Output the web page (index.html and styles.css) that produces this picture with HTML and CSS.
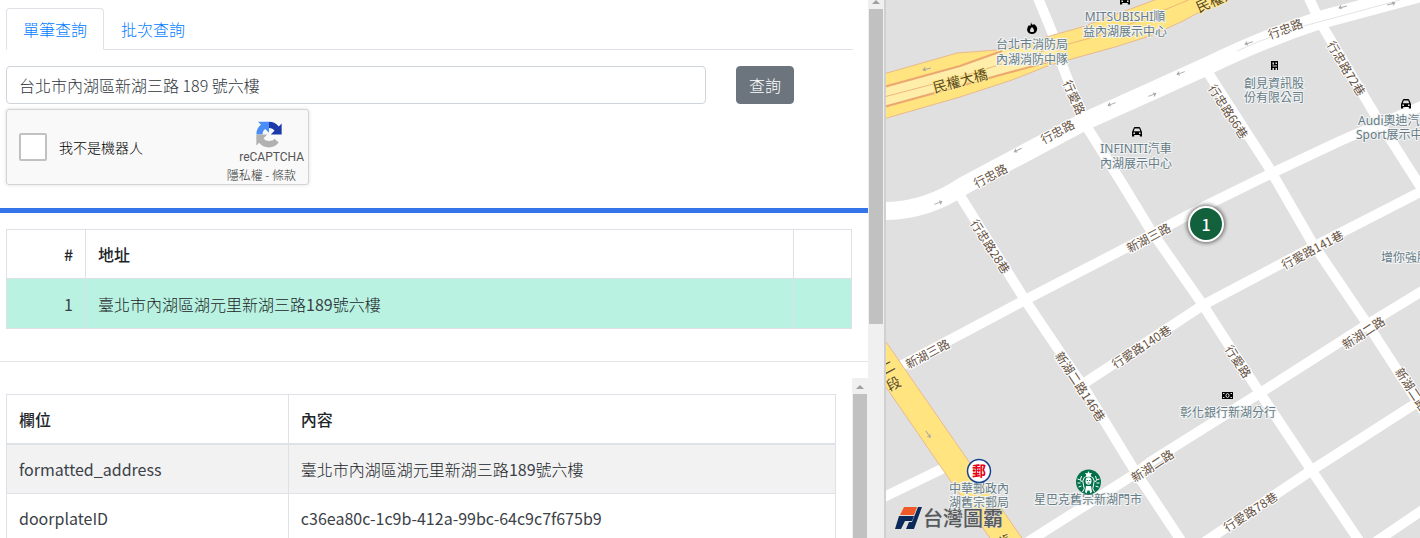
FILE: index.html
```html
<!DOCTYPE html>
<html lang="zh-Hant">
<head>
<meta charset="utf-8">
<meta name="viewport" content="width=device-width, initial-scale=1">
<title>地址查詢</title>
<link rel="stylesheet" href="styles.css">
</head>
<body>
<div class="app">
  <section class="panel">
    <div class="panel-body">
      <div class="query">
        <nav class="tabs">
          <a class="tab tab-active" href="#single">單筆查詢</a>
          <a class="tab" href="#batch">批次查詢</a>
        </nav>
        <form class="search">
          <input class="search-input" type="text" aria-label="地址" value="台北市內湖區新湖三路 189 號六樓">
          <button class="search-button" type="button">查詢</button>
        </form>
        <div class="captcha">
          <label class="captcha-check"><input class="captcha-box" type="checkbox"><span>我不是機器人</span></label>
          <div class="captcha-brand">
            <svg class="captcha-logo" viewBox="0 0 32 32" aria-hidden="true">
              <path fill="#1c3aa9" d="M16 1c5 0 9 2 11.500 5.500L31 3v13H18l4.500-4.500C21 9.500 19 8.300 16 8.300z"/>
              <path fill="#4a8df6" d="M16 1v13l-4.500-4.500C9.500 11 8.300 13 8.300 16H1c0-5 2-9 5.500-11.500L3 1z"/>
              <path fill="#b1b1b1" d="M1 16h13l-4.500 4.500c1.500 2 3.500 3.200 6.500 3.200 3.200 0 5.300-1 6.500-2.700l5 4.500C25 29 21 31.300 16 31.300c-5 0-9-2-11.500-5.500L1 29z"/>
            </svg>
            <span class="captcha-name">reCAPTCHA</span>
            <span class="captcha-links"><a href="#privacy">隱私權</a> - <a href="#terms">條款</a></span>
          </div>
        </div>
      </div>
      <div class="results">
        <table class="table result-table">
          <colgroup><col class="col-number"><col><col class="col-action"></colgroup>
          <thead><tr><th class="number">#</th><th>地址</th><th></th></tr></thead>
          <tbody><tr class="selected"><td class="number latin">1</td><td>臺北市內湖區湖元里新湖三路<span class="latin">189</span>號六樓</td><td></td></tr></tbody>
        </table>
      </div>
      <div class="details">
        <div class="details-body">
          <table class="table detail-table">
            <colgroup><col class="col-field"><col></colgroup>
            <thead><tr><th>欄位</th><th>內容</th></tr></thead>
            <tbody>
              <tr><td class="latin">formatted_address</td><td>臺北市內湖區湖元里新湖三路<span class="latin">189</span>號六樓</td></tr>
              <tr><td class="latin">doorplateID</td><td class="latin">c36ea80c-1c9b-412a-99bc-64c9c7f675b9</td></tr>
            </tbody>
          </table>
        </div>
        <div class="scrollbar"><span class="arrow"></span><span class="thumb thumb-fill"></span></div>
      </div>
    </div>
    <div class="scrollbar scrollbar-main"><span class="arrow"></span><span class="thumb thumb-page"></span></div>
  </section>

  <main class="map">
    <svg class="map-canvas" viewBox="886 0 534 538" preserveAspectRatio="xMinYMin slice" role="img" aria-label="地圖">
      <defs>
        <g id="car"><path d="M-5 4.500V0l1.800-4.200Q-3-5-2-5h4q1 0 1.200.8L5 0v4.500H2.800V3h-5.600v1.500z"/><path fill="#e0e0e0" d="M-2.300-3.500h4.600L3.200-.8h-6.400zM-3.600.5h1.600V2h-1.600zM2 .5h1.600V2H2z"/></g>
        <path id="oneway" class="oneway" d="M-4 0h8M-1.500-2L-4 0l2.500 1.500"/>
      </defs>

      <g class="road">
        <path d="M1038-2L1052 32L1063 67L1085 124L1120 180L1150 229L1203 305L1230 347L1260 393L1312 471L1360 542"/>
        <path d="M959 194L1025 300L1060 352L1083 386L1135 471L1182 542"/>
        <path d="M1205 68L1268 166L1313 244L1368 325L1390 359L1440 436"/>
        <path d="M1308-4L1320 22L1380 123L1424 192"/>
        <path d="M897 368L1025 300L1147 237L1205 206L1268 175L1340 141L1424 105"/>
        <path d="M1083 384L1150 340L1203 305L1313 247L1424 190"/>
        <path d="M1026 543L1135 474L1150 462L1260 393L1368 324L1424 290"/>
        <path d="M884 497L948 466"/>
        <path d="M1203 543L1312 470L1424 398"/>
        <path d="M1374 543L1424 509"/>
      </g>
      <path class="road road-wide" d="M880 211Q925 212 963 186L1083 122L1150 92L1205 67Q1265 38 1320 20L1424-8"/>
      <path class="tram" d="M1237 51Q1280 31 1330 19L1400 0"/>

      <path class="highway" d="M880 75L957 53L997 50L1050 36L1082 27L1160-2H1225L1183 21L1150 36L1115 47L1050 65L1012 80L960 97L880 120z"/>
      <path class="highway-inner" d="M880 88L960 66L1002 52L1060 45L1050 61L1000 75L960 86L880 108z"/>
      <path class="lane" d="M880 88L960 66L1002 51M880 108L960 86L1000 75L1048 62"/>
      <path class="lane-thin" d="M880 98L960 77L1050 49L1105 34L1150 16L1193-2"/>
      <path class="highway" d="M880 334L886 342L1026 544H994L886 387L880 379z"/>

      <use href="#oneway" transform="translate(927 69) rotate(-14)"/>
      <use href="#oneway" transform="translate(1018 150) rotate(-26)"/>
      <use href="#oneway" transform="translate(1112 104) rotate(-20)"/>
      <use href="#oneway" transform="translate(1152 95) rotate(160)"/>
      <use href="#oneway" transform="translate(1181 73) rotate(-20)"/>
      <use href="#oneway" transform="translate(1249 43) rotate(-18)"/>
      <use href="#oneway" transform="translate(1343 7) rotate(-14)"/>
      <use href="#oneway" transform="translate(1391 4) rotate(164)"/>
      <use href="#oneway" transform="translate(938 203) rotate(160)"/>
      <use href="#oneway" transform="translate(928 434) rotate(235)"/>

      <g class="street">
        <text class="street-major" transform="translate(960 80) rotate(-15)">民權大橋</text>
        <text class="street-major" transform="translate(1222 -4) rotate(-24)">民權大橋</text>
        <text class="street-major" transform="translate(887 367) rotate(-28)">二</text>
        <text class="street-major" transform="translate(893 383) rotate(-28)">段</text>
        <text class="street-major" transform="translate(1004 541) rotate(-28)">舊</text>
        <text transform="translate(1057 131) rotate(-28)">行忠路</text>
        <text transform="translate(990 175) rotate(-28)">行忠路</text>
        <text transform="translate(1285 28) rotate(-20)">行忠路</text>
        <text transform="translate(1075 97) rotate(66)">行愛路</text>
        <text transform="translate(991 246) rotate(57)">行忠路28巷</text>
        <text transform="translate(1229 111) rotate(57)">行忠路66巷</text>
        <text transform="translate(1347 68) rotate(59)">行忠路72巷</text>
        <text transform="translate(1148 237) rotate(-28)">新湖三路</text>
        <text transform="translate(927 353) rotate(-28)">新湖三路</text>
        <text transform="translate(1312 249) rotate(-28)">行愛路141巷</text>
        <text transform="translate(1141 346) rotate(-33)">行愛路140巷</text>
        <text transform="translate(1081 386) rotate(57)">新湖二路146巷</text>
        <text transform="translate(1239 361) rotate(57)">行愛路</text>
        <text transform="translate(1363 332) rotate(-33)">新湖二路</text>
        <text transform="translate(1152 465) rotate(-33)">新湖二路</text>
        <text transform="translate(1421 402) rotate(57)">新湖二路146巷</text>
        <text transform="translate(1250 511) rotate(-33)">行愛路78巷</text>
      </g>

      <g class="place">
        <text x="1032" y="49">台北市消防局</text><text x="1032" y="64">內湖消防中隊</text>
        <text x="1125" y="21">MITSUBISHI順</text><text x="1125" y="36">益內湖展示中心</text>
        <text x="1136" y="153">INFINITI汽車</text><text x="1136" y="168">內湖展示中心</text>
        <text x="1274" y="88">創見資訊股</text><text x="1274" y="102">份有限公司</text>
        <text class="place-start" x="1358" y="125">Audi奧迪汽車</text><text class="place-start" x="1356" y="139">Sport展示中心</text>
        <text class="place-start" x="1381" y="262">增你強股份</text>
        <text x="1228" y="417">彰化銀行新湖分行</text>
        <text x="1088" y="504">星巴克舊宗新湖門市</text>
        <text x="979" y="493">中華郵政內</text><text x="979" y="507">湖舊宗郵局</text>
      </g>

      <use href="#car" x="1125" y="0"/>
      <use href="#car" x="1137" y="132"/>
      <use href="#car" x="1406" y="104"/>
      <path d="M1031 22q0 2 2 3l1-1q4 3 3 6-1 4-5 4t-5-4q0-3 2-5l1 1q1-1 1-4z"/><path fill="#e0e0e0" d="M1032 27q3 3 1.500 5h-3q-1.500-2 1.500-5z"/>
      <path d="M1271 61h7v9h-7z"/><path fill="#e0e0e0" d="M1272.500 62.500h1.500v2h-1.500zM1275.500 62.500h1.500v1.500h-1.500zM1272.500 65.500h4.500v1h-4.500zM1272.500 68h1.500v2h-1.500zM1275.500 68h1.500v2h-1.500z"/>
      <path d="M1222 392h11v7h-11z"/><ellipse class="cash" cx="1227.500" cy="395.500" rx="1.500" ry="2"/><path fill="#ddd" d="M1223 393h1.500v1h-1.500zM1230.500 393h1.500v1h-1.500zM1223 397h1.500v1h-1.500zM1230.500 397h1.500v1h-1.500z"/>

      <circle class="post-ring" cx="979" cy="471" r="11.500"/>
      <text class="post-mark" x="979" y="476">郵</text>

      <g transform="translate(1088.500 482)">
        <circle r="12.500" fill="#00704a"/>
        <path fill="#fff" d="M0-11l1 2.300 2.600-.3-1.500 2 1.500 2.500Q0-6-3.600-4.500l1.500-2.500-1.500-2 2.600.3z"/>
        <ellipse cy="-1" rx="3" ry="3.800" fill="#fff"/>
        <path class="siren" d="M-4-5q-3 4-1 8t-1 7M4-5q3 4 1 8t1 7M-7-6q-2 4 0 6M7-6q2 4 0 6M-11-3l3 1M11-3l-3 1M-11 1h3M11 1H8M-10 5l3-1M10 5L7 4"/>
        <path fill="#fff" d="M-2.500 4h5l1 6-1.500 1.500-1-3H-1l-1 3L-3.500 10z"/>
        <path stroke="#00704a" d="M-1.800-1.500h1.200M.6-1.500h1.200M-1 1h2"/>
      </g>

      <path fill="#f05a28" d="M904 507h13l-3 8h-14z"/>
      <path fill="#0b2a5b" d="M918 507h4l-8 22h-8l3-7h3zM899 516h15l-2 5h-7l-4 8h-6z"/>
      <text class="map-brand" x="923" y="526">台灣圖霸</text>
    </svg>
    <button class="pin" type="button">1</button>
  </main>
</div>
</body>
</html>
```

FILE: styles.css
```css
* { box-sizing: border-box; }

body {
  margin: 0;
  color: #212529;
  background: #fff;
  font: 300 16px/24px "Noto Sans CJK TC", "Noto Sans", sans-serif;
}

a { color: #007bff; text-decoration: none; }

.app {
  display: grid;
  grid-template-columns: 177fr 107fr;
  height: 100vh;
  overflow: hidden;
}

.panel {
  display: grid;
  grid-template-columns: minmax(0, 1fr) 17px;
  min-width: 0;
  height: 100vh;
}

.panel-body {
  display: flex;
  flex-direction: column;
  min-width: 0;
  height: 100vh;
}

.query {
  padding: 8px 15px 23px 6px;
  border-bottom: 5px solid #3574e8;
}

.tabs {
  display: flex;
  border-bottom: 1px solid #dee2e6;
}

.tab {
  margin-bottom: -1px;
  padding: 8px 16px;
  border: 1px solid transparent;
  border-radius: 4px 4px 0 0;
}

.tab-active {
  border-color: #dee2e6 #dee2e6 #fff;
}

.search {
  display: grid;
  grid-template-columns: 700fr 117fr;
  gap: 30px;
  justify-items: start;
  margin-top: 16px;
}

.search-input {
  width: 100%;
  height: 38px;
  padding: 6px 12px;
  border: 1px solid #ced4da;
  border-radius: 4px;
  color: #30363c;
  font: inherit;
}

.search-button {
  height: 38px;
  padding: 6px 12px;
  border: 1px solid #6c757d;
  border-radius: 4px;
  color: #fff;
  background: #6c757d;
  font: inherit;
}

.captcha {
  display: flex;
  justify-content: space-between;
  width: 303px;
  height: 76px;
  margin-top: 5px;
  border: 1px solid #d3d3d3;
  border-radius: 3px;
  background: #f9f9f9;
  box-shadow: 0 0 4px rgba(0, 0, 0, .12);
  overflow: hidden;
}

.captcha-check {
  display: flex;
  align-items: center;
  gap: 12px;
  padding-left: 12px;
  color: #000;
  font-size: 14px;
}

.captcha-box {
  width: 28px;
  height: 28px;
  margin: 0;
  border: 2px solid #c1c1c1;
  border-radius: 2px;
  background: #fff;
  appearance: none;
}

.captcha-brand {
  display: flex;
  flex-direction: column;
  align-items: flex-end;
  padding: 11px 4px 0 0;
  color: #555;
  white-space: nowrap;
}

.captcha-logo {
  width: 32px;
  height: 32px;
  margin-right: 19px;
}

.captcha-name {
  font: 400 12px/18px Roboto, sans-serif;
}

.captcha-links {
  margin-right: 8px;
  color: #333;
  font-size: 12px;
  line-height: 18px;
}

.captcha-links a { color: #333; }

.results {
  padding: 16px 16px 32px 6px;
  border-bottom: 1px solid #e5e5e5;
}

.table {
  width: 100%;
  border-collapse: collapse;
  table-layout: fixed;
}

.table th,
.table td {
  height: 49px;
  padding: 12px;
  border: 1px solid #dee2e6;
  text-align: left;
}

.table th { font-weight: 500; }
.table .number { text-align: right; }
.table .latin { color: #3b4147; font-weight: 400; }
.result-table .selected { background: #b9f2e1; }
.result-table .selected td { height: 50px; }
.detail-table thead th { border-bottom: 2px solid #dee2e6; }
.detail-table tbody tr:nth-child(odd) { background: #f2f2f2; }

.col-number { width: 79px; }
.col-action { width: 58px; }
.col-field { width: 34%; }

.details {
  display: grid;
  grid-template-columns: minmax(0, 1fr) 16px;
  flex: 1;
  min-height: 0;
  margin-top: 16px;
}

.details-body {
  min-height: 0;
  padding: 16px 16px 0 6px;
  overflow: hidden;
}

.scrollbar {
  display: flex;
  flex-direction: column;
  align-items: center;
  min-height: 0;
  padding-top: 7px;
  background: #f0f0f0;
}

.scrollbar-main {
  height: 100vh;
  padding-top: 0;
  border-right: 1px solid #d0d0d0;
}

.arrow {
  width: 8px;
  border: 4px solid transparent;
  border-top-width: 0;
  border-bottom-color: #a0a0a0;
}

.thumb {
  width: 14px;
  margin-top: 5px;
  background: #c1c1c1;
}

.thumb-fill { flex: 1; }
.thumb-page { height: 315px; }

.map {
  position: relative;
  min-width: 0;
  height: 100vh;
  background: #e0e0e0;
  border-left: 1px solid #d0d0d0;
  overflow: hidden;
}

.map-canvas {
  display: block;
  width: 100%;
  height: 100%;
}

.road { fill: none; stroke: #fff; stroke-width: 10; }
.road-wide { stroke-width: 18; }
.tram { fill: none; stroke: #e4e4e4; }
.highway { fill: #ffe47f; stroke: #e9b98c; }
.highway-inner { fill: #ffeeaa; }
.lane { fill: none; stroke: #eba870; stroke-width: 2; }
.lane-thin { fill: none; stroke: #edb77c; }
.oneway { fill: none; stroke: #a8a8a8; }

.street text {
  fill: #66523f;
  stroke: #fff;
  stroke-width: 2;
  paint-order: stroke;
  font-size: 12px;
  font-weight: 400;
  text-anchor: middle;
  dominant-baseline: central;
}

.street .street-major {
  fill: #5a4a20;
  stroke: #ffe88f;
  font-size: 14px;
}

.place text {
  fill: #667b84;
  stroke: #f2f4f5;
  stroke-width: 2;
  paint-order: stroke;
  font-family: "Noto Sans", "Noto Sans CJK TC", sans-serif;
  font-size: 12px;
  font-weight: 400;
  text-anchor: middle;
}

.place .place-start { text-anchor: start; }

.cash { fill: #000; stroke: #ddd; }
.post-ring { fill: #fff; stroke: #174391; stroke-width: 1.5; }
.post-mark { fill: #e60012; font-size: 14px; font-weight: 700; text-anchor: middle; }
.siren { fill: none; stroke: #fff; stroke-width: 1; }

.map-brand {
  fill: #55595c;
  stroke: #d8d8d8;
  stroke-width: 1;
  paint-order: stroke;
  font-size: 20px;
  font-weight: 500;
}

.pin {
  position: absolute;
  top: 206px;
  left: 302px;
  width: 36px;
  height: 36px;
  padding: 0;
  border: 2px solid #fff;
  border-radius: 50%;
  color: #fff;
  background: #12603c;
  box-shadow: 0 0 4px 1px rgba(0, 0, 0, .6);
  font: 500 16px/32px "Noto Sans CJK TC", sans-serif;
}
```
